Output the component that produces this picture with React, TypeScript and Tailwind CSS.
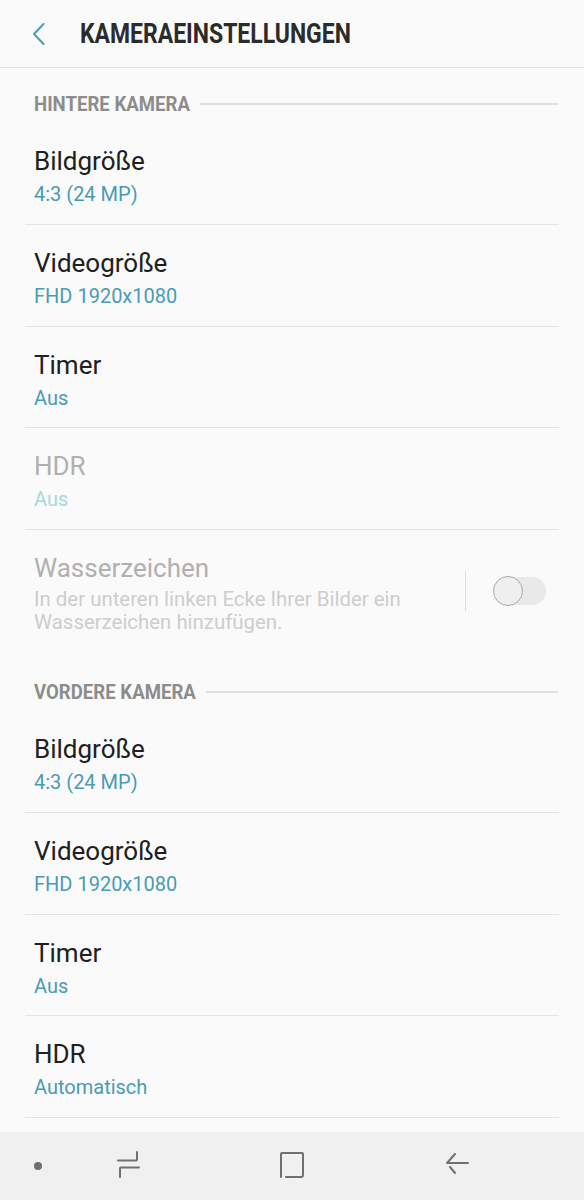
import React from 'react';

interface SettingRowProps {
  title: string;
  value: string;
  disabled?: boolean;
}

const SettingRow: React.FC<SettingRowProps> = ({ title, value, disabled }) => (
  <div className="mx-[25px] h-[101.67px] border-b border-[#e4e4e4] pl-[9px] pt-[23px]">
    <div className={`text-[26px] leading-[30px] ${disabled ? 'text-[#b0b0b0]' : 'text-[#202020]'}`}>{title}</div>
    <div className={`mt-[5px] text-[20px] leading-[26px] ${disabled ? 'text-[#acd5e1]' : 'text-[#4a9bb6]'}`}>{value}</div>
  </div>
);

const SectionHeader: React.FC<{ label: string; width: string }> = ({ label, width }) => (
  <div className="flex items-center pl-[34px] pr-[26px] pt-[24px] pb-[7.3px]">
    <div className={`${width} shrink-0 h-[24px]`}>
      <span className="inline-block origin-left scale-x-[0.93] whitespace-nowrap text-[20px] leading-[24px] font-bold text-[#8c8c8c]">
        {label}
      </span>
    </div>
    <div className="ml-[10px] flex-1 h-[2px] bg-[#dedede]" />
  </div>
);

export default function App() {
  return (
    <div className="w-[584px] h-[1200px] bg-[#fafafa] flex flex-col overflow-hidden font-['Roboto',sans-serif]">
      {/* Header */}
      <div className="h-[68px] shrink-0 flex items-center border-b border-[#e2e2e2]">
        <svg width="13" height="22" viewBox="0 0 13 22" className="ml-[32px]">
          <path d="M11.5 1 L2 11 L11.5 21" fill="none" stroke="#4a9bb6" strokeWidth="2" strokeLinecap="round" strokeLinejoin="round" />
        </svg>
        <div className="ml-[35px] w-[270px] h-[34px]">
          <span className="inline-block origin-left scale-x-[0.82] whitespace-nowrap text-[28px] leading-[34px] font-bold text-[#2b2b2b]">
            KAMERAEINSTELLUNGEN
          </span>
        </div>
      </div>

      {/* Hintere Kamera */}
      <SectionHeader label="HINTERE KAMERA" width="w-[156px]" />
      <SettingRow title="Bildgröße" value="4:3 (24 MP)" />
      <SettingRow title="Videogröße" value="FHD 1920x1080" />
      <SettingRow title="Timer" value="Aus" />
      <SettingRow title="HDR" value="Aus" disabled />

      {/* Wasserzeichen */}
      <div className="mx-[25px] h-[126px] shrink-0 flex pl-[9px] pt-[23px]">
        <div className="w-[425px]">
          <div className="text-[26px] leading-[30px] text-[#b0b0b0]">Wasserzeichen</div>
          <div className="mt-[5px] text-[20.4px] leading-[23px] text-[#cdcdcd]">
            In der unteren linken Ecke Ihrer Bilder ein Wasserzeichen hinzufügen.
          </div>
        </div>
        <div className="ml-[6px] mt-[18px] w-px h-[40px] bg-[#dddddd]" />
        <div className="ml-[27px] mt-[24px] relative w-[53px] h-[28px] rounded-full bg-[#e9e9e9]">
          <div className="absolute left-0 top-[-1px] w-[30px] h-[30px] rounded-full bg-[#efefef] border border-[#a9a9a9]" />
        </div>
      </div>

      {/* Vordere Kamera */}
      <SectionHeader label="VORDERE KAMERA" width="w-[162px]" />
      <SettingRow title="Bildgröße" value="4:3 (24 MP)" />
      <SettingRow title="Videogröße" value="FHD 1920x1080" />
      <SettingRow title="Timer" value="Aus" />
      <SettingRow title="HDR" value="Automatisch" />

      <div className="flex-1" />

      {/* Navigation bar */}
      <div className="h-[68px] shrink-0 bg-[#f0f0f0] relative flex items-center">
        <div className="absolute left-[34px] top-[30px] w-[8px] h-[8px] rounded-full bg-[#6e6e6e]" />
        <svg width="26" height="28" viewBox="0 0 26 28" className="absolute left-[116px] top-[19px]">
          <path d="M21 1 V8.5 Q21 9.5 20 9.5 H2" fill="none" stroke="#707070" strokeWidth="2" strokeLinecap="round" />
          <path d="M23 16.5 H5 Q4 16.5 4 17.5 V26" fill="none" stroke="#707070" strokeWidth="2" strokeLinecap="round" />
        </svg>
        <svg width="26" height="28" viewBox="0 0 26 28" className="absolute left-[279px] top-[19px]">
          <path d="M2 26 V3 Q2 2 3 2 H23 Q24 2 24 3 V24 Q24 26 22 26 H7" fill="none" stroke="#707070" strokeWidth="2" strokeLinecap="round" />
        </svg>
        <svg width="26" height="28" viewBox="0 0 26 28" className="absolute left-[444px] top-[19px]">
          <path d="M24 12 H3 L11 3" fill="none" stroke="#707070" strokeWidth="2" strokeLinecap="round" strokeLinejoin="round" />
          <path d="M6 16 L11 22" fill="none" stroke="#707070" strokeWidth="2" strokeLinecap="round" />
        </svg>
      </div>
    </div>
  );
}
